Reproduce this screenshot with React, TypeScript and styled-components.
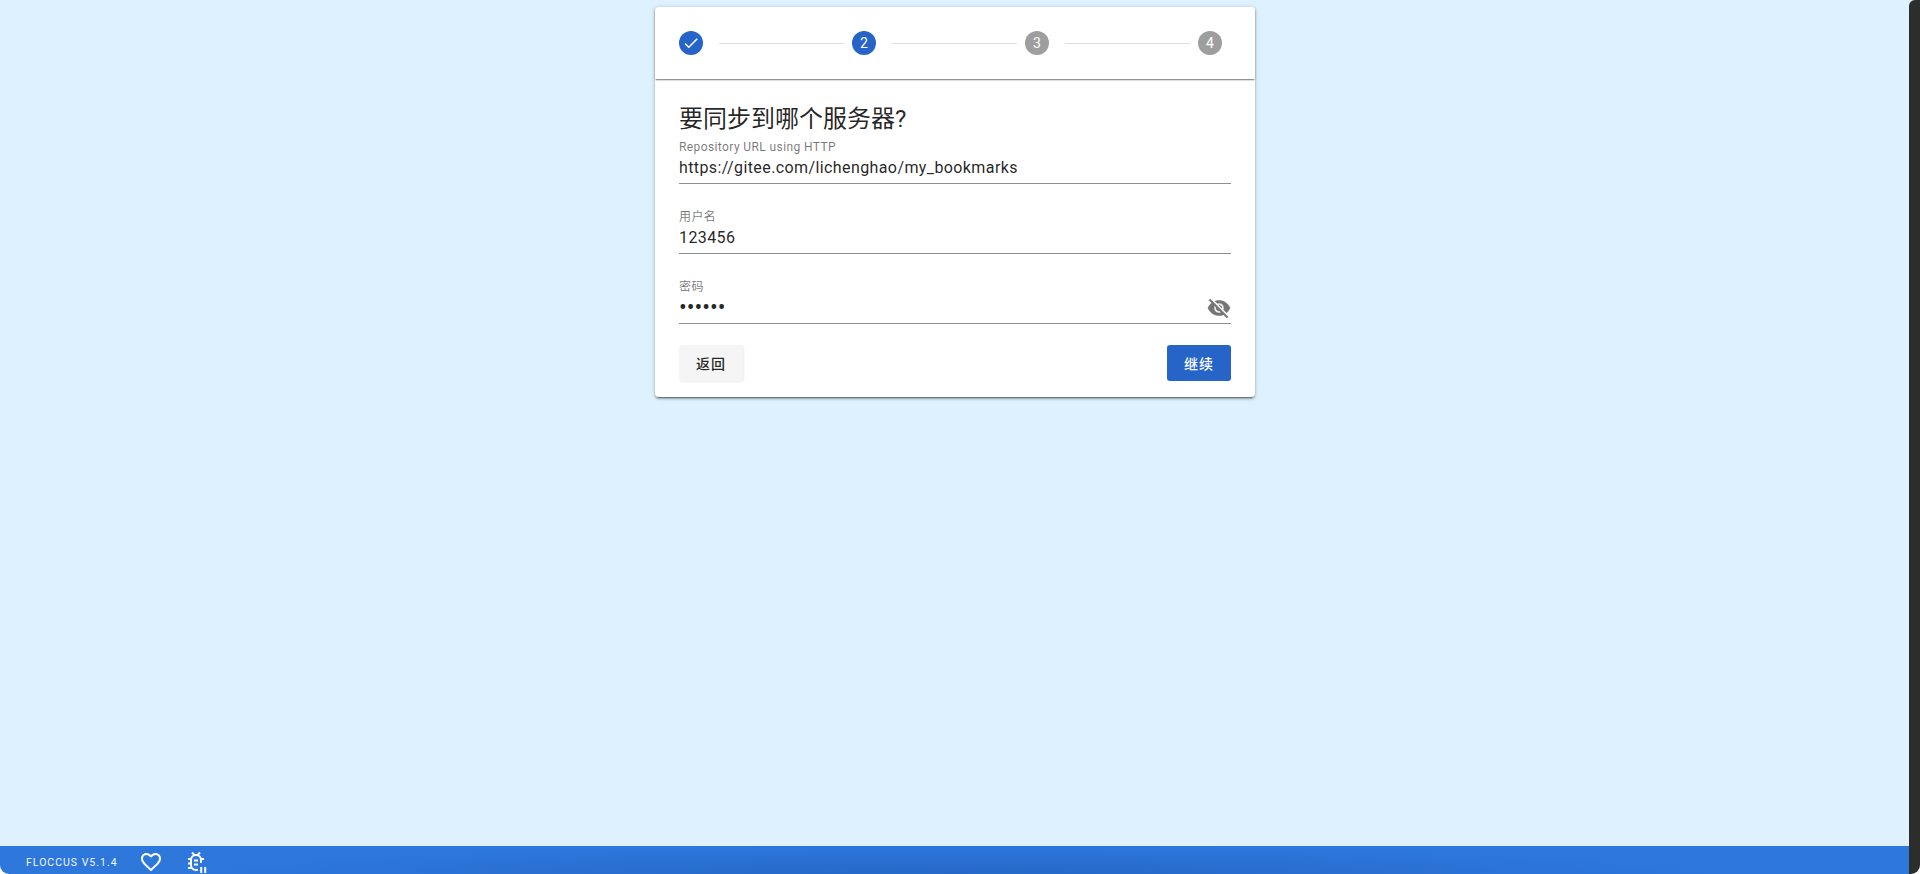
import React from "react";
import styled, { createGlobalStyle } from "styled-components";

const Global = createGlobalStyle`
  html, body { margin: 0; padding: 0; height: 100%; background: #fff; overflow: hidden; }
  #root { height: 100%; }
  * { box-sizing: border-box; }
`;
const Screen = styled.div`
  height: 874px; display: flex; background: #fff; overflow: hidden;
  border-radius: 0 0 9px 9px;
  font-family: Roboto, "Noto Sans CJK SC", sans-serif; color: rgba(0,0,0,.87);
`;
const Page = styled.div`
  flex: 1; display: flex; flex-direction: column; background: #ddf2fe; min-width: 0;
`;
const Main = styled.main`
  flex: 1; display: flex; justify-content: center; align-items: flex-start; padding-top: 7px;
`;
const Card = styled.section`
  width: 600px; height: 390px; background: #fff; border-radius: 4px; margin-right: -1px;
  box-shadow: 0 3px 1px -2px rgba(0,0,0,.3), 0 2px 2px 0 rgba(0,0,0,.24), 0 1px 5px 0 rgba(0,0,0,.18);
`;
const Stepper = styled.div`
  height: 72px; display: flex; align-items: center; padding: 0 33px 0 24px; gap: 8px;
  box-shadow: 0 2px 1px -1px rgba(0,0,0,.3), 0 1px 2px 0 rgba(0,0,0,.25);
`;
const Dot = styled.div<{ $on?: boolean }>`
  width: 24px; height: 24px; border-radius: 50%; flex: none; display: flex; align-items: center; justify-content: center;
  margin-right: 8px;
  background: ${p => (p.$on ? "#2664c8" : "#9e9e9e")}; color: #fff; font-size: 14px;
  &:last-child { margin-right: 0; }
`;
const Rail = styled.div`flex: 1; height: 1px; background: #dedede;`;
const Body = styled.div`padding: 24px 24px 0;`;
const Title = styled.h1`
  margin: 0 0 4px; font-size: 24px; line-height: 32px; font-weight: 400; white-space: nowrap;
`;
const Field = styled.div`
  height: 45px; border-bottom: 1px solid #8f8f8f; position: relative;
  & + & { margin-top: 25px; }
`;
const Label = styled.div`
  font-size: 12px; line-height: 16px; letter-spacing: .4px; color: rgba(0,0,0,.54); white-space: nowrap;
`;
const Value = styled.div`
  font-size: 16px; line-height: 24px; letter-spacing: .4px; margin-top: 1px; white-space: nowrap;
`;
const Dots = styled(Value)`
  font-size: 23px; letter-spacing: 0;
`;
const Eye = styled.svg`position: absolute; right: 0; bottom: 3px; width: 24px; height: 24px; fill: #757575; stroke: #757575; stroke-width: .6;`;
const Actions = styled.div`display: flex; justify-content: space-between; margin-top: 21px;`;
const Button = styled.button<{ $primary?: boolean }>`
  width: 64px; height: 36px; border: 0; border-radius: 3px; padding: 0; font: 500 14px Roboto, "Noto Sans CJK SC", sans-serif;
  background: ${p => (p.$primary ? "#2664c8" : "#f5f5f5")}; color: ${p => (p.$primary ? "#fff" : "rgba(0,0,0,.87)")};
  letter-spacing: 1px;
  box-shadow: ${p => (p.$primary ? "none" : "1px 1px 2px rgba(0,0,0,.08)")};
`;
const Footer = styled.footer`
  height: 28px; display: flex; align-items: center; padding: 4px 0 0 26px; color: #fff; flex: none;
  background: radial-gradient(ellipse 800px 30px at 50% 100%, #2568c8, rgba(37,104,200,0)), #2e78dc;
`;
const Version = styled.span`font-size: 10.5px; letter-spacing: 1px; width: 113px; white-space: nowrap; opacity: .95;`;
const Heart = styled.svg`width: 24px; height: 24px; flex: none; fill: #fff; margin-right: 21px;`;
const Bug = styled.svg`width: 24px; height: 24px; flex: none; fill: none; stroke: #fff; stroke-width: 2;`;
const EdgeWell = styled.div`width: 11px; flex: none; background: #ddf2fe; display: flex;`;
const EdgeBar = styled.div`flex: 1; background: #2c2e2c; border-top-left-radius: 6px;`;

export default function App() {
  return (
    <Screen>
      <Global />
      <Page>
        <Main>
          <Card>
            <Stepper>
              <Dot $on><svg width="18" height="18" viewBox="0 0 24 24" fill="#fff"><path d="M21 7L9 19l-5.5-5.5 1.41-1.41L9 16.17 19.59 5.59 21 7z" /></svg></Dot>
              <Rail />
              <Dot $on>2</Dot>
              <Rail />
              <Dot>3</Dot>
              <Rail />
              <Dot>4</Dot>
            </Stepper>
            <Body>
              <Title>要同步到哪个服务器?</Title>
              <Field>
                <Label>Repository URL using HTTP</Label>
                <Value>https://gitee.com/lichenghao/my_bookmarks</Value>
              </Field>
              <Field>
                <Label>用户名</Label>
                <Value>123456</Value>
              </Field>
              <Field>
                <Label>密码</Label>
                <Dots>••••••</Dots>
                <Eye viewBox="0 0 24 24"><path d="M12 7c2.76 0 5 2.24 5 5 0 .65-.13 1.26-.36 1.83l2.92 2.92c1.51-1.26 2.7-2.89 3.43-4.75-1.73-4.39-6-7.5-11-7.5-1.4 0-2.74.25-3.98.7l2.16 2.16C10.74 7.13 11.35 7 12 7zM2 4.27l2.28 2.28.46.46C3.08 8.3 1.78 10.02 1 12c1.73 4.39 6 7.5 11 7.5 1.55 0 3.03-.3 4.38-.84l.42.42L19.73 22 21 20.73 3.27 3 2 4.27zM7.53 9.8l1.55 1.55c-.05.21-.08.43-.08.65 0 1.66 1.34 3 3 3 .22 0 .44-.03.65-.08l1.55 1.55c-.67.33-1.41.53-2.2.53-2.76 0-5-2.24-5-5 0-.79.2-1.53.53-2.2zm4.31-.78l3.15 3.15.02-.16c0-1.66-1.34-3-3-3l-.17.01z" /></Eye>
              </Field>
              <Actions>
                <Button>返回</Button>
                <Button $primary>继续</Button>
              </Actions>
            </Body>
          </Card>
        </Main>
        <Footer>
          <Version>FLOCCUS V5.1.4</Version>
          <Heart viewBox="0 0 24 24"><path d="M16.5 3c-1.74 0-3.41.81-4.5 2.09C10.91 3.81 9.24 3 7.5 3 4.42 3 2 5.42 2 8.5c0 3.78 3.4 6.86 8.55 11.54L12 21.35l1.45-1.32C18.6 15.36 22 12.28 22 8.5 22 5.42 19.58 3 16.5 3zm-4.4 15.55l-.1.1-.1-.1C7.14 14.24 4 11.39 4 8.5 4 6.5 5.5 5 7.5 5c1.54 0 3.04.99 3.57 2.36h1.87C13.46 5.99 14.96 5 16.5 5c2 0 3.5 1.5 3.5 3.5 0 2.89-3.14 5.74-7.9 10.05z" /></Heart>
          <Bug viewBox="0 0 24 24">
            <path d="M14 19.6c-.6.2-1.3.4-2 .4-2.8 0-5-2.2-5-5v-5c0-2.8 2.2-5 5-5s5 2.2 5 5v3" />
            <path d="M8 2.5l2.6 2.6M16 2.5l-2.6 2.6M4 9h3M4 13.5h3M4 18h3.5M17 9h3M10 10.5h4M10 14.5h4" />
            <path d="M17.2 17v6M21.2 17v6" />
          </Bug>
        </Footer>
      </Page>
      <EdgeWell><EdgeBar /></EdgeWell>
    </Screen>
  );
}
